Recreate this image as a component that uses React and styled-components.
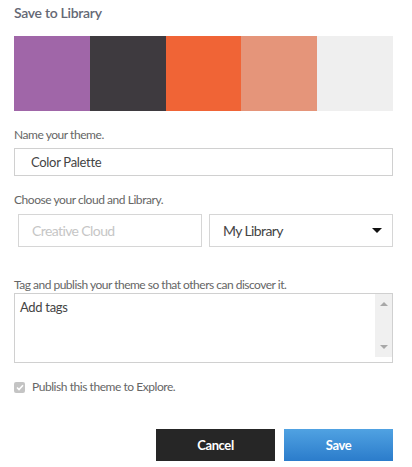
import React from "react";
import styled, { createGlobalStyle } from "styled-components";

const Global = createGlobalStyle`
  html, body { margin: 0; padding: 0; background: #fff; }
  body { font-family: Lato, "Open Sans", sans-serif; }
  * { box-sizing: border-box; }
`;

const Panel = styled.div`
  width: 412px;
  height: 467px;
  padding: 3px 19px 0 14px;
  display: flex;
  flex-direction: column;
`;

const Title = styled.h1`
  margin: 0;
  font-size: 14px;
  line-height: 20px;
  font-weight: 600;
  letter-spacing: -0.3px;
  color: #646874;
`;

const Swatches = styled.div`
  margin-top: 13px;
  display: grid;
  grid-template-columns: repeat(5, 1fr);
  height: 75px;
`;

const Swatch = styled.div`
  background: ${(p) => p.$c};
`;

const Label = styled.div`
  margin-top: ${(p) => p.$mt}px;
  font-size: 12px;
  line-height: 16px;
  color: #666;
  letter-spacing: ${(p) => (p.$tight ? -0.5 : -0.45)}px;
`;

const TextInput = styled.div`
  margin-top: 5px;
  height: 28px;
  border: 1px solid #d0d0d0;
  padding: 0 16px;
  display: flex;
  align-items: center;
  font-size: 13px;
  color: #444;
  letter-spacing: -0.3px;
`;

const Row = styled.div`
  margin-top: 6px;
  display: flex;
  gap: 7px;
  padding-left: 4px;
`;

const Box = styled.div`
  flex: 1;
  height: 33px;
  border: 1px solid #d6d6d6;
  display: flex;
  align-items: center;
  justify-content: space-between;
  padding: 0 10px 0 13px;
  font-size: 14px;
  color: ${(p) => (p.$muted ? "#c6c6c6" : "#444")};
  letter-spacing: -0.6px;
`;

const Caret = styled.span`
  width: 0;
  height: 0;
  border-left: 5px solid transparent;
  border-right: 5px solid transparent;
  border-top: 5px solid #111;
`;

const TagArea = styled.div`
  margin-top: 0;
  height: 70px;
  border: 1px solid #d0d0d0;
  display: flex;
`;

const TagText = styled.div`
  flex: 1;
  padding: 5px 5px;
  font-size: 13px;
  color: #444;
  letter-spacing: -0.3px;
`;

const ScrollBar = styled.div`
  width: 17px;
  height: 63px;
  background: #f0f0f0;
  display: flex;
  flex-direction: column;
  justify-content: space-between;
  align-items: center;
  padding: 8px 0 8px;
`;

const Arrow = styled.span`
  width: 0;
  height: 0;
  border-left: 4px solid transparent;
  border-right: 4px solid transparent;
  ${(p) =>
    p.$up ? "border-bottom: 4px solid #a8a8a8;" : "border-top: 4px solid #a8a8a8;"}
`;

const CheckRow = styled.label`
  margin-top: 16px;
  display: flex;
  align-items: center;
  gap: 7px;
  font-size: 12px;
  line-height: 16px;
  color: #666;
  letter-spacing: -0.45px;
`;

const Check = styled.span`
  width: 11px;
  height: 11px;
  border-radius: 2px;
  background: #c4c4c4;
  display: flex;
  align-items: center;
  justify-content: center;
`;

const Buttons = styled.div`
  margin-top: 34px;
  display: flex;
  justify-content: flex-end;
  gap: 9px;
`;

const Button = styled.button`
  width: ${(p) => p.$w}px;
  height: 32px;
  border: none;
  padding: 0;
  font-family: Lato, sans-serif;
  font-weight: 700;
  font-size: 13px;
  letter-spacing: -0.4px;
  color: #fff;
  background: ${(p) =>
    p.$primary ? "linear-gradient(#50a2e2, #2b7ccb)" : "#262626"};
`;

const colors = ["#a066a8", "#3e3a3f", "#f06436", "#e5957a", "#efefef"];

export default function App() {
  return (
    <>
      <Global />
      <Panel>
        <Title>Save to Library</Title>
        <Swatches>
          {colors.map((c) => (
            <Swatch key={c} $c={c} />
          ))}
        </Swatches>
        <Label $mt={16}>Name your theme.</Label>
        <TextInput>Color Palette</TextInput>
        <Label $mt={16}>Choose your cloud and Library.</Label>
        <Row>
          <Box $muted>Creative Cloud</Box>
          <Box>
            My Library
            <Caret />
          </Box>
        </Row>
        <Label $mt={30} $tight>
          Tag and publish your theme so that others can discover it.
        </Label>
        <TagArea>
          <TagText>Add tags</TagText>
          <ScrollBar>
            <Arrow $up />
            <Arrow />
          </ScrollBar>
        </TagArea>
        <CheckRow>
          <Check>
            <svg width="8" height="7" viewBox="0 0 8 7">
              <path d="M1 3.5 L3 5.5 L7 1.2" stroke="#fff" strokeWidth="1.6" fill="none" />
            </svg>
          </Check>
          Publish this theme to Explore.
        </CheckRow>
        <Buttons>
          <Button $w={119}>Cancel</Button>
          <Button $w={109} $primary>Save</Button>
        </Buttons>
      </Panel>
    </>
  );
}
